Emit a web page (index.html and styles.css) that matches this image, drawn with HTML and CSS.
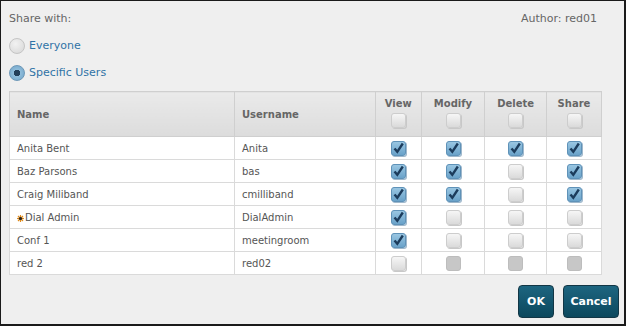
FILE: index.html
```html
<!DOCTYPE html>
<html lang="en">
<head>
  <meta charset="UTF-8">
  <title>Share</title>
  <link rel="stylesheet" href="styles.css">
</head>
<body>
<div class="dialog">
  <div class="top-row">
    <span>Share with:</span>
    <span>Author: red01</span>
  </div>

  <div class="radios">
    <label class="radio-row"><span class="radio"></span>Everyone</label>
    <label class="radio-row"><span class="radio on"></span>Specific Users</label>
  </div>

  <table class="users">
    <thead>
    <tr>
      <th class="col-name">Name</th>
      <th class="col-user">Username</th>
      <th class="col-perm">View<span class="cb"></span></th>
      <th class="col-perm">Modify<span class="cb"></span></th>
      <th class="col-perm">Delete<span class="cb"></span></th>
      <th class="col-perm">Share<span class="cb"></span></th>
    </tr>
    </thead>
    <tbody>
    <tr>
      <td>Anita Bent</td>
      <td>Anita</td>
      <td class="perm"><span class="cb on"></span></td>
      <td class="perm"><span class="cb on"></span></td>
      <td class="perm"><span class="cb on"></span></td>
      <td class="perm"><span class="cb on"></span></td>
    </tr>
    <tr>
      <td>Baz Parsons</td>
      <td>bas</td>
      <td class="perm"><span class="cb on"></span></td>
      <td class="perm"><span class="cb on"></span></td>
      <td class="perm"><span class="cb"></span></td>
      <td class="perm"><span class="cb on"></span></td>
    </tr>
    <tr>
      <td>Craig Miliband</td>
      <td>cmilliband</td>
      <td class="perm"><span class="cb on"></span></td>
      <td class="perm"><span class="cb on"></span></td>
      <td class="perm"><span class="cb"></span></td>
      <td class="perm"><span class="cb on"></span></td>
    </tr>
    <tr>
      <td><svg class="admin-icon" width="7" height="7" viewBox="0 0 7 7">
        <g stroke="#e08a1a" stroke-width="1.2">
          <line x1="3.5" y1="0" x2="3.5" y2="7"/>
          <line x1="0" y1="3.5" x2="7" y2="3.5"/>
          <line x1="1" y1="1" x2="6" y2="6"/>
          <line x1="6" y1="1" x2="1" y2="6"/>
        </g>
        <circle cx="3.5" cy="3.5" r="1.6" fill="#222"/>
      </svg>Dial Admin</td>
      <td>DialAdmin</td>
      <td class="perm"><span class="cb on"></span></td>
      <td class="perm"><span class="cb"></span></td>
      <td class="perm"><span class="cb"></span></td>
      <td class="perm"><span class="cb"></span></td>
    </tr>
    <tr>
      <td>Conf 1</td>
      <td>meetingroom</td>
      <td class="perm"><span class="cb on"></span></td>
      <td class="perm"><span class="cb"></span></td>
      <td class="perm"><span class="cb"></span></td>
      <td class="perm"><span class="cb"></span></td>
    </tr>
    <tr>
      <td>red 2</td>
      <td>red02</td>
      <td class="perm"><span class="cb"></span></td>
      <td class="perm"><span class="cb off"></span></td>
      <td class="perm"><span class="cb off"></span></td>
      <td class="perm"><span class="cb off"></span></td>
    </tr>
    </tbody>
  </table>

  <div class="buttons">
    <button class="btn-ok">OK</button>
    <button class="btn-cancel">Cancel</button>
  </div>
</div>
</body>
</html>
```

FILE: styles.css
```css
body {
    margin: 0;
    font-family: "DejaVu Sans", Verdana, sans-serif;
    font-size: 11px;
    color: #555;
}
.dialog {
    box-sizing: border-box;
    width: 626px;
    height: 326px;
    background-color: #efefef;
    border-style: solid;
    border-color: #1a1a1a;
    border-width: 1px 2px 2px 1px;
    padding: 0 5px 0 8px;
    display: flex;
    flex-direction: column;
}
.top-row {
    display: flex;
    justify-content: space-between;
    padding: 10px 22px 0 0;
    line-height: 16px;
    color: #666;
}
.radios {
    margin-top: 5px;
}
.radio-row {
    display: flex;
    align-items: center;
    height: 27px;
    color: #2f73a6;
}
.radio {
    box-sizing: border-box;
    width: 16px;
    height: 16px;
    margin-right: 4px;
    border-radius: 50%;
    border: 1px solid #c4c4c4;
    background: radial-gradient(circle at 40% 35%, #f2f2f2, #d6d6d6);
}
.radio.on {
    border-color: #6d98b8;
    background: radial-gradient(circle, #233f5a 0, #233f5a 3px, #8fbcda 3.5px, #6ea3c8 100%);
}
.users {
    width: 593px;
    margin-top: 5px;
    border-collapse: collapse;
    background-color: white;
    border: 1px solid #d2d2d2;
    font-size: 10px;
}
th, td {
    border: 1px solid #dadada;
    text-align: left;
    padding: 0 0 0 7px;
}
td {
    height: 22px;
}
th {
    height: 44px;
    background: linear-gradient(#eaeaea, #dcdcdc);
    color: #666;
    font-weight: bold;
    border-color: #cfcfcf;
}
.col-name { width: 217px; }
.col-user { width: 133px; }
th.col-perm {
    height: 38px;
    text-align: center;
    padding: 6px 0 0;
    vertical-align: top;
}
th.col-perm .cb {
    display: block;
    margin: 4px auto 0;
}
td.perm {
    text-align: center;
    padding: 0;
}
.cb {
    box-sizing: border-box;
    display: inline-block;
    vertical-align: middle;
    width: 15px;
    height: 15px;
    border-radius: 3px;
    border: 1px solid #cdcdcd;
    background: linear-gradient(#f6f6f6, #dadada);
    box-shadow: 1px 1px 0 #c8c8c8;
}
.cb.on {
    border-color: #5f92b8;
    box-shadow: 1px 1px 0 #9fb8cc;
    background: url("data:image/svg+xml,%3Csvg xmlns='http://www.w3.org/2000/svg' width='13' height='13' viewBox='0 0 13 13'%3E%3Cpath d='M2.5 6.5 L5.3 9.8 L10.8 1.5' fill='none' stroke='%231c3c5c' stroke-width='2.4'/%3E%3C/svg%3E") center / 13px 13px no-repeat,
                linear-gradient(#99c6e2, #6aa2c9);
}
.cb.off {
    border-color: #bdbdbd;
    background: #c7c7c7;
    box-shadow: none;
}
.admin-icon {
    vertical-align: -1px;
    margin-right: 1px;
}
.buttons {
    display: flex;
    justify-content: flex-end;
    gap: 9px;
    margin-top: 10px;
}
.buttons button {
    height: 33px;
    padding: 0;
    border: 1px solid #123645;
    border-radius: 4px;
    background: linear-gradient(#1d6580, #0c485d);
    color: white;
    font-family: "DejaVu Sans", Verdana, sans-serif;
    font-size: 11px;
    font-weight: bold;
    cursor: pointer;
}
.btn-ok { width: 36px; }
.btn-cancel { width: 56px; }
```
